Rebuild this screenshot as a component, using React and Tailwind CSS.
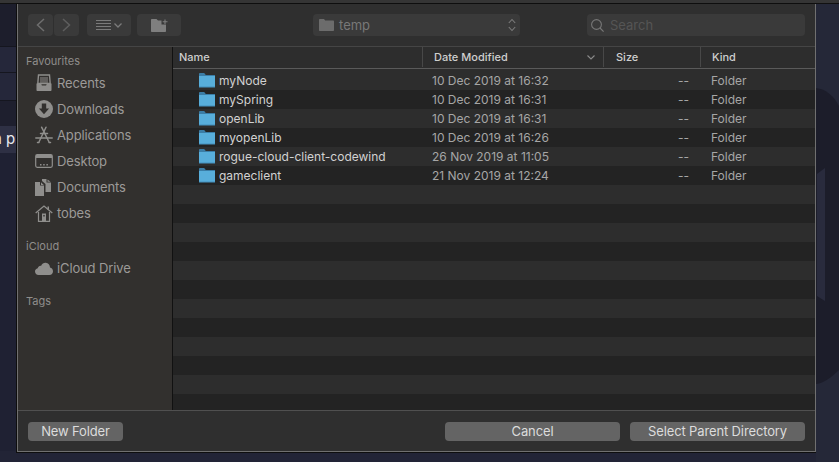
const files = [
  { name: 'myNode', date: '10 Dec 2019 at 16:32' },
  { name: 'mySpring', date: '10 Dec 2019 at 16:31' },
  { name: 'openLib', date: '10 Dec 2019 at 16:31' },
  { name: 'myopenLib', date: '10 Dec 2019 at 16:26' },
  { name: 'rogue-cloud-client-codewind', date: '26 Nov 2019 at 11:05' },
  { name: 'gameclient', date: '21 Nov 2019 at 12:24' },
]

const stripes = Array.from({ length: 18 }, (_, i) => i)

const FolderIcon = () => (
  <svg width="16" height="15" viewBox="0 0 16 15">
    <path d="M0 1.2C0 .5.4 0 1 0h4.2l1.6 2H16v3H0z" fill="#3b7da6" />
    <path d="M0 3h16v11.2H0z" fill="#58aedb" />
    <path d="M0 13.6h16v.8H0z" fill="#3f88b5" />
  </svg>
)

const RecentsIcon = () => (
  <svg width="18" height="18" viewBox="0 0 18 18" fill="none">
    <path d="M3.5 1h11l.7 8.5H2.8z" stroke="#8f8e8c" strokeWidth="1.4" />
    <path d="M5 4h8M5 6h8M5 8h8" stroke="#8f8e8c" strokeWidth="1.1" />
    <path d="M1.5 9.5h4.6l.8 2h4.2l.8-2h4.6V16c0 .6-.4 1-1 1h-13c-.6 0-1-.4-1-1z" fill="#8f8e8c" />
  </svg>
)

const DownloadsIcon = () => (
  <svg width="18" height="18" viewBox="0 0 18 18">
    <circle cx="9" cy="9" r="9" fill="#8f8e8c" />
    <path d="M6.8 3.6h4.4v5h2.9L9 14.2 3.9 8.6h2.9z" fill="#32302e" />
  </svg>
)

const ApplicationsIcon = () => (
  <svg width="18" height="18" viewBox="0 0 18 18" fill="none" stroke="#8f8e8c" strokeWidth="1.5" strokeLinecap="round">
    <path d="M6.6 1.2 13.8 15.5" />
    <path d="M11 1.2 4.2 15.5" />
    <path d="M.8 12h16.4" />
    <path d="M5.5 7.5h7" />
    <path d="M4 16.5h-1.500M15.5 16.500H14" />
  </svg>
)

const DesktopIcon = () => (
  <svg width="18" height="14" viewBox="0 0 18 14" fill="none">
    <rect x=".7" y=".7" width="16.600" height="12.600" rx="1.500" stroke="#8f8e8c" strokeWidth="1.200" />
    <path d="M1 1h16v3H1z" fill="#8f8e8c" />
    <path d="M5 10h1.500v1.500H5zM8.200 10h1.500v1.500H8.200zM11.400 10h1.500v1.500h-1.500z" fill="#8f8e8c" />
  </svg>
)

const DocumentsIcon = () => (
  <svg width="16" height="17" viewBox="0 0 16 17">
    <path d="M0 3h5v3.500h4V17H0z" fill="#8f8e8c" />
    <path d="M6 3.200 8.800 6H6z" fill="#8f8e8c" />
    <path d="M7 0h4.500v3.500H16V13h-5.500V5L7 2z" fill="#8f8e8c" />
    <path d="M12.500.5 15.500 2.800h-3z" fill="#8f8e8c" />
  </svg>
)

const HomeIcon = () => (
  <svg width="18" height="17" viewBox="0 0 18 17" fill="none">
    <path d="M.7 8 9 1l8.300 7" stroke="#8f8e8c" strokeWidth="1.300" />
    <path d="M3.500 7v9.300h11V7" stroke="#8f8e8c" strokeWidth="1.200" />
    <path d="M7 8.500h4v8H7z" fill="#8f8e8c" />
    <path d="M8.300 10h1.400v1.500H8.300z" fill="#32302e" />
    <path d="M12.500 1.500h1.500v3h-1.500z" fill="#8f8e8c" />
  </svg>
)

const CloudIcon = () => (
  <svg width="18" height="13" viewBox="0 0 18 13">
    <path d="M3.500 13C1.500 13 0 11.500 0 9.600c0-1.700 1.100-3 2.700-3.300C3.200 4.500 4.600 3.600 6 3.900 7 1.700 8.900.5 10.800.7c2.500.2 4.200 2.300 4.200 4.900 1.800.4 3 1.900 3 3.700 0 2.100-1.500 3.700-3.500 3.700z" fill="#8f8e8c" />
  </svg>
)

const favourites = [
  { label: 'Recents', icon: <RecentsIcon /> },
  { label: 'Downloads', icon: <DownloadsIcon /> },
  { label: 'Applications', icon: <ApplicationsIcon /> },
  { label: 'Desktop', icon: <DesktopIcon /> },
  { label: 'Documents', icon: <DocumentsIcon /> },
  { label: 'tobes', icon: <HomeIcon /> },
]

const SideItem = ({ icon, label }) => (
  <div className="flex h-[26px] items-center pl-[17px]">
    <span className="flex w-[22px] shrink-0 justify-start">{icon}</span>
    <span className="text-[13px] leading-none tracking-[-0.01em] text-[#9c9a98]">{label}</span>
  </div>
)

const SideLabel = ({ children, className }) => (
  <p className={`pl-2 text-[11px] leading-[14px] text-[#8f8d8b] ${className}`}>{children}</p>
)

const HeaderCell = ({ className, children }) => (
  <div className={`flex h-full items-center border-r border-[#484848] text-[11px] font-medium text-[#cfcfcf] ${className}`}>
    {children}
  </div>
)

const ToolButton = ({ className, children }) => (
  <div className={`flex h-[22px] items-center justify-center rounded-[4px] bg-[#3a3a3a] ${className}`}>{children}</div>
)

const FooterButton = ({ className, children }) => (
  <button className={`h-[19px] rounded-[4px] bg-[#646464] text-[13px] leading-none tracking-[-0.01em] text-[#dcdcdc] ${className}`}>{children}</button>
)

const App = () => {
  return (
    <div className="flex h-[462px] w-[839px] flex-col overflow-hidden bg-[#222436]" style={{ fontFamily: 'Inter, "Liberation Sans", sans-serif' }}>
      <div className="h-[3px] shrink-0 bg-[#353535]" />
      <div className="h-px shrink-0 bg-[#111111]" />

      <div className="flex items-start">
        {/* left of the dialog */}
        <div className="flex w-[17px] shrink-0 flex-col overflow-hidden">
          <div className="h-[42px] bg-[#1d1e2c]" />
          <div className="h-[26px] border-t border-[#15161f] bg-[#25273a]" />
          <div className="h-[28px] border-t border-[#15161f] bg-[#25273a]" />
          <div className="h-[26px] border-t border-[#15161f] bg-[#1e1f2e]" />
          <div className="flex h-[27px] items-center bg-[#2e3044]">
            <span className="ml-[-7px] whitespace-nowrap text-[15px] text-[#e8e8ee]">n pr</span>
          </div>
          <div className="h-[298px] bg-[#1f2133]" />
        </div>

        {/* dialog */}
        <div className="flex h-[448px] w-[799px] shrink-0 flex-col border border-[#707070] border-t-0 bg-[#2f2f2f] outline outline-[#0e0e0e]">
          {/* toolbar */}
          <div className="flex h-[43px] shrink-0 items-center border-b border-[#454545] pl-[10px]">
            <ToolButton className="w-[25px]">
              <svg width="9" height="14" viewBox="0 0 9 14" fill="none" stroke="#6e6e6e" strokeWidth="1.500"><path d="M8 1 1.500 7 8 13" /></svg>
            </ToolButton>
            <ToolButton className="ml-px w-[25px]">
              <svg width="9" height="14" viewBox="0 0 9 14" fill="none" stroke="#5e5e5e" strokeWidth="1.500"><path d="M1 1 7.500 7 1 13" /></svg>
            </ToolButton>
            <ToolButton className="ml-2 w-[44px] gap-[3px]">
              <svg width="15" height="11" viewBox="0 0 15 11" stroke="#7b7b7b" strokeWidth="1"><path d="M0 .5h15M0 3.500h15M0 6.500h15M0 9.500h15" /></svg>
              <svg width="8" height="5" viewBox="0 0 8 5" fill="none" stroke="#7b7b7b" strokeWidth="1.300"><path d="M.5.5 4 4 7.500.5" /></svg>
            </ToolButton>
            <ToolButton className="ml-[6px] w-[44px]">
              <svg width="17" height="13" viewBox="0 0 17 13">
                <path d="M0 1c0-.6.4-1 1-1h4.500l1.500 1.500h3.500V5.500H15V12c0 .6-.4 1-1 1H1c-.6 0-1-.4-1-1z" fill="#7f7f7f" />
                <path d="M14 .5v4.500M11.700 2.700h4.800" stroke="#7f7f7f" strokeWidth="1.100" />
              </svg>
            </ToolButton>
            <ToolButton className="ml-[132px] w-[207px] justify-start pl-[6px]">
              <svg width="15" height="12" viewBox="0 0 15 12"><path d="M0 1c0-.6.4-1 1-1h4l1.200 1.500H14c.6 0 1 .4 1 1V11c0 .6-.4 1-1 1H1c-.6 0-1-.4-1-1z" fill="#6c6c6c" /></svg>
              <span className="ml-[5px] text-[13px] leading-none text-[#787878]">temp</span>
              <svg className="ml-auto mr-[4px]" width="8" height="14" viewBox="0 0 8 14" fill="none" stroke="#7c7c7c" strokeWidth="1.100"><path d="M.8 5 4 1.500 7.200 5M.8 9 4 12.500 7.200 9" /></svg>
            </ToolButton>
            <ToolButton className="ml-[67px] w-[218px] justify-start pl-[4px]">
              <svg width="13" height="13" viewBox="0 0 13 13" fill="none" stroke="#777777" strokeWidth="1.100"><circle cx="5.500" cy="5.500" r="4.900" /><path d="m9 9 3.600 3.600" /></svg>
              <span className="ml-[6px] text-[13px] leading-none text-[#555555]">Search</span>
            </ToolButton>
          </div>

          <div className="flex min-h-0 flex-1">
            {/* sidebar */}
            <aside className="w-[155px] shrink-0 border-r border-[#111111] bg-[#32302e] pt-[7px]">
              <SideLabel className="pb-[2px]">Favourites</SideLabel>
              {favourites.map((item) => (
                <SideItem key={item.label} icon={item.icon} label={item.label} />
              ))}
              <SideLabel className="mt-[13px]">iCloud</SideLabel>
              <div className="mt-[2px]">
                <SideItem icon={<CloudIcon />} label="iCloud Drive" />
              </div>
              <SideLabel className="mt-[13px]">Tags</SideLabel>
            </aside>

            {/* file list */}
            <div className="flex min-w-0 flex-1 flex-col bg-[#2d2d2d]">
              <div className="flex h-[22px] shrink-0 items-center border-b border-[#5a5a5a] pb-[1px]">
                <HeaderCell className="w-[250px] pl-[6px]">Name</HeaderCell>
                <HeaderCell className="w-[181px] justify-between pl-[11px] pr-2">
                  Date Modified
                  <svg width="8" height="5" viewBox="0 0 8 5" fill="none" stroke="#8a8a8a" strokeWidth="1.100"><path d="M.5.5 4 4 7.500.5" /></svg>
                </HeaderCell>
                <HeaderCell className="w-[97px] pl-3">Size</HeaderCell>
                <div className="flex h-full items-center pl-[11px] text-[11px] font-medium text-[#cfcfcf]">Kind</div>
              </div>
              <div className="mt-[2px] min-h-0 flex-1 overflow-hidden">
                {stripes.map((i) => {
                  const file = files[i]
                  return (
                    <div key={i} className={`flex h-[19px] items-center text-[12px] leading-none ${i % 2 ? 'bg-[#232323]' : 'bg-[#2d2d2d]'}`}>
                      {file && (
                        <>
                          <div className="flex w-[249px] items-center gap-1 pl-[26px] text-[#d2d2d2]">
                            <FolderIcon />
                            <span>{file.name}</span>
                          </div>
                          <div className="w-[181px] pl-[10px] text-[#a6a6a6]">{file.date}</div>
                          <div className="w-[97px] pr-[11px] text-right text-[#a6a6a6]">--</div>
                          <div className="pl-[11px] text-[#a6a6a6]">Folder</div>
                        </>
                      )}
                    </div>
                  )
                })}
              </div>
            </div>
          </div>

          {/* footer */}
          <div className="flex h-[41px] shrink-0 items-center border-t border-[#505050] pl-[10px] pr-[10px] pt-[1px]">
            <FooterButton className="w-[95px]">New Folder</FooterButton>
            <FooterButton className="ml-auto w-[175px]">Cancel</FooterButton>
            <FooterButton className="ml-[10px] w-[175px]">Select Parent Directory</FooterButton>
          </div>
        </div>

        {/* right of the dialog, blurred wallpaper */}
        <div className="h-[458px] flex-1 bg-[#252838]">
          <svg width="23" height="458" viewBox="0 0 23 458">
            <path d="M0 84C10 85 18 92 23 102V366C16 373 8 379 0 380Z" fill="#1c1d2a" />
            <path d="M1 170 9 164V297L1 292Z" fill="#292b3d" />
          </svg>
        </div>
      </div>
    </div>
  )
}

export default App
